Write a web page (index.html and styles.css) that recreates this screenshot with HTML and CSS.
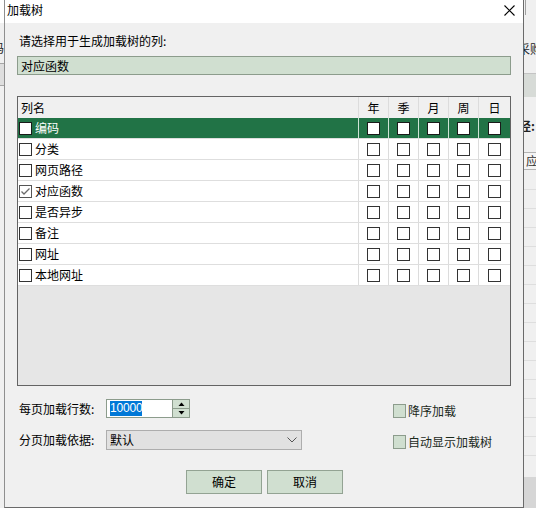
FILE: index.html
```html
<!DOCTYPE html>
<html lang="zh-CN">
<head>
<meta charset="utf-8">
<title>加载树</title>
<link rel="stylesheet" href="styles.css">
</head>
<body>
<div class="desktop">
  <div class="app-left">
    <div class="app-left-top"></div>
    <span class="app-left-text">码</span>
    <div class="app-left-box"></div>
  </div>
  <div class="app-right">
    <div class="app-right-tick"></div>
    <span class="app-right-text t1">采购</span>
    <div class="app-right-band"></div>
    <span class="app-right-text t2">径:</span>
    <div class="app-right-cell"><span>应</span></div>
    <div class="app-right-lines"></div>
    <div class="app-right-foot"></div>
  </div>

  <div class="dialog">
    <div class="titlebar">
      <span class="title">加载树</span>
      <svg class="close" width="11" height="11" viewBox="0 0 11 11"><path d="M0.5 0.5 L10.5 10.5 M10.5 0.5 L0.5 10.5" stroke="#000" stroke-width="1.1" fill="none"/></svg>
    </div>
    <div class="dialog-body">
      <div class="prompt">请选择用于生成加载树的列:</div>
      <div class="selected-field">对应函数</div>

      <div class="grid">
        <div class="grid-row head">
          <div class="cell name-cell head-name">列名</div>
          <div class="cell chk-cell">年</div>
          <div class="cell chk-cell">季</div>
          <div class="cell chk-cell">月</div>
          <div class="cell chk-cell">周</div>
          <div class="cell chk-cell">日</div>
        </div>
        <div class="grid-row active">
          <div class="cell name-cell"><span class="box"></span>编码</div>
          <div class="cell chk-cell"><span class="box"></span></div>
          <div class="cell chk-cell"><span class="box"></span></div>
          <div class="cell chk-cell"><span class="box"></span></div>
          <div class="cell chk-cell"><span class="box"></span></div>
          <div class="cell chk-cell"><span class="box"></span></div>
        </div>
        <div class="grid-row">
          <div class="cell name-cell"><span class="box"></span>分类</div>
          <div class="cell chk-cell"><span class="box"></span></div>
          <div class="cell chk-cell"><span class="box"></span></div>
          <div class="cell chk-cell"><span class="box"></span></div>
          <div class="cell chk-cell"><span class="box"></span></div>
          <div class="cell chk-cell"><span class="box"></span></div>
        </div>
        <div class="grid-row">
          <div class="cell name-cell"><span class="box"></span>网页路径</div>
          <div class="cell chk-cell"><span class="box"></span></div>
          <div class="cell chk-cell"><span class="box"></span></div>
          <div class="cell chk-cell"><span class="box"></span></div>
          <div class="cell chk-cell"><span class="box"></span></div>
          <div class="cell chk-cell"><span class="box"></span></div>
        </div>
        <div class="grid-row">
          <div class="cell name-cell"><span class="box checked"><svg width="11" height="11" viewBox="0 0 11 11"><polyline points="1.5,5.5 4,8 9.5,2.5" fill="none" stroke="#6b6b6b" stroke-width="1.3"/></svg></span>对应函数</div>
          <div class="cell chk-cell"><span class="box"></span></div>
          <div class="cell chk-cell"><span class="box"></span></div>
          <div class="cell chk-cell"><span class="box"></span></div>
          <div class="cell chk-cell"><span class="box"></span></div>
          <div class="cell chk-cell"><span class="box"></span></div>
        </div>
        <div class="grid-row">
          <div class="cell name-cell"><span class="box"></span>是否异步</div>
          <div class="cell chk-cell"><span class="box"></span></div>
          <div class="cell chk-cell"><span class="box"></span></div>
          <div class="cell chk-cell"><span class="box"></span></div>
          <div class="cell chk-cell"><span class="box"></span></div>
          <div class="cell chk-cell"><span class="box"></span></div>
        </div>
        <div class="grid-row">
          <div class="cell name-cell"><span class="box"></span>备注</div>
          <div class="cell chk-cell"><span class="box"></span></div>
          <div class="cell chk-cell"><span class="box"></span></div>
          <div class="cell chk-cell"><span class="box"></span></div>
          <div class="cell chk-cell"><span class="box"></span></div>
          <div class="cell chk-cell"><span class="box"></span></div>
        </div>
        <div class="grid-row">
          <div class="cell name-cell"><span class="box"></span>网址</div>
          <div class="cell chk-cell"><span class="box"></span></div>
          <div class="cell chk-cell"><span class="box"></span></div>
          <div class="cell chk-cell"><span class="box"></span></div>
          <div class="cell chk-cell"><span class="box"></span></div>
          <div class="cell chk-cell"><span class="box"></span></div>
        </div>
        <div class="grid-row">
          <div class="cell name-cell"><span class="box"></span>本地网址</div>
          <div class="cell chk-cell"><span class="box"></span></div>
          <div class="cell chk-cell"><span class="box"></span></div>
          <div class="cell chk-cell"><span class="box"></span></div>
          <div class="cell chk-cell"><span class="box"></span></div>
          <div class="cell chk-cell"><span class="box"></span></div>
        </div>
      </div>

      <div class="options">
        <div class="opt-label">每页加载行数:</div>
        <div class="spinner">
          <div class="spin-text"><span class="sel">10000</span></div>
          <div class="spin-btns">
            <div class="spin-btn"><svg width="7" height="4" viewBox="0 0 7 4"><polygon points="0.5,4 3.5,0.5 6.5,4" fill="#000"/></svg></div>
            <div class="spin-btn down"><svg width="7" height="4" viewBox="0 0 7 4"><polygon points="0.5,0 3.5,3.5 6.5,0" fill="#000"/></svg></div>
          </div>
        </div>
        <div class="check-option"><span class="sage-box"></span>降序加载</div>

        <div class="opt-label">分页加载依据:</div>
        <div class="combo"><span>默认</span><svg width="10" height="6" viewBox="0 0 10 6"><polyline points="0.5,0.5 5,5 9.5,0.5" fill="none" stroke="#555" stroke-width="1"/></svg></div>
        <div class="check-option"><span class="sage-box"></span>自动显示加载树</div>
      </div>

      <div class="buttons">
        <button class="btn">确定</button>
        <button class="btn">取消</button>
      </div>
    </div>
  </div>
</div>
</body>
</html>
```

FILE: styles.css
```css
* { box-sizing: border-box; }
html, body { margin: 0; padding: 0; }
body {
  font-family: "Noto Sans CJK SC", "Noto Sans", sans-serif;
  font-size: 12px;
  color: #000;
  background: #f0f0f0;
}
.desktop {
  position: relative;
  width: 536px;
  height: 508px;
  overflow: hidden;
  background: #f0f0f0;
}

/* background application fragments */
.app-left {
  position: absolute;
  left: 0; top: 0;
  width: 5px; height: 508px;
  overflow: hidden;
  background: #f0f0f0;
}
.app-left-top { height: 23px; background: #fff; }
.app-left-text {
  position: absolute; left: -8px; top: 40px;
  font-size: 12px; line-height: 16px; color: #222;
  white-space: nowrap;
}
.app-left-box {
  position: absolute; left: 0; top: 63px;
  width: 5px; height: 23px;
  border-top: 1px solid #a6a6a6;
  border-bottom: 1px solid #a6a6a6;
  background: #dedede;
}
.app-right {
  position: absolute;
  left: 512px; top: 0;
  width: 24px; height: 508px;
  overflow: hidden;
  background: #f0f0f0;
}
.app-right-tick {
  position: absolute; left: 13px; top: 0;
  width: 1px; height: 15px; background: #a0a0a0;
}
.app-right-text {
  position: absolute;
  font-size: 12px; line-height: 16px; color: #222;
  white-space: nowrap;
}
.t1 { left: 6px; top: 41px; }
.t2 { left: 7px; top: 118px; font-weight: bold; }
.app-right-band {
  position: absolute; left: 0; right: 0; top: 73px; height: 24px;
  background: #d7dbd7;
  border-top: 1px solid #c4c4c4;
}
.app-right-cell {
  position: absolute; left: 10px; right: -2px; top: 152px; height: 18px;
  border: 1px solid #b4b4b4;
  background: #f4f4f4;
  font-size: 12px; line-height: 16px;
  padding-left: 3px; color: #333;
  white-space: nowrap;
}
.app-right-lines {
  position: absolute; left: 0; right: 0; top: 171px; height: 300px;
  background: repeating-linear-gradient(to bottom, #f0f0f0 0, #f0f0f0 18px, #dedede 18px, #dedede 19px);
}
.app-right-foot {
  position: absolute; left: 0; right: 0; top: 477px; bottom: 0;
  background: #d6d6d6;
}

/* dialog window */
.dialog {
  position: absolute;
  left: 4px; top: 0;
  width: 520px; height: 508px;
  background: #f0f0f0;
  border-left: 1px solid #8f8f8f;
  border-right: 1px solid #6a6a6a;
  border-bottom: 1px solid #6a6a6a;
  display: flex;
  flex-direction: column;
}
.titlebar {
  height: 23px;
  flex: none;
  background: #fff;
  display: flex;
  align-items: flex-start;
  padding-left: 2px;
}
.title {
  margin-top: 2px;
  line-height: 16px;
  font-size: 12px;
}
.close {
  margin-left: auto;
  margin-right: 8px;
  margin-top: 5px;
}
.dialog-body {
  padding: 10px 11px 0 12px;
}
.prompt {
  padding-left: 2px;
  line-height: 16px;
}
.selected-field {
  margin-top: 7px;
  width: 494px;
  height: 19px;
  border: 1px solid #8c9c8c;
  background: #d0dfd0;
  padding-left: 3px;
  line-height: 17px;
}

/* grid */
.grid {
  margin-top: 21px;
  width: 494px;
  height: 290px;
  border: 1px solid #646464;
  background: #e6e6e6;
}
.grid-row {
  display: grid;
  grid-template-columns: 340px 30px 30px 30px 30px 32px;
  height: 21px;
  background: #fff;
  border-bottom: 1px solid #dedede;
}
.grid-row.head {
  background: #f0f0f0;
  border-bottom: none;
}
.grid-row.active {
  background: #217346;
  color: #fff;
}
.cell {
  display: flex;
  align-items: center;
  line-height: 16px;
}
.name-cell {
  padding-left: 1px;
  gap: 3px;
}
.head-name { padding-left: 3px; }
.chk-cell {
  justify-content: center;
  border-left: 1px solid #dcdcdc;
}
.active .chk-cell { border-left-color: #cfe3d6; }
.box {
  width: 13px;
  height: 13px;
  flex: none;
  border: 1px solid #333;
  background: #fff;
  display: flex;
  align-items: center;
  justify-content: center;
}
.active .box { border-color: #1a1a1a; }
.box.checked { border-color: #555; }

/* options */
.options {
  margin-top: 13px;
  display: grid;
  grid-template-columns: 89px 287px auto;
  grid-template-rows: 19px 20px;
  row-gap: 12px;
  align-items: center;
}
.opt-label {
  padding-left: 2px;
  line-height: 16px;
}
.spinner {
  width: 84px;
  height: 19px;
  border: 1px solid #8c9c8c;
  background: #fff;
  display: flex;
}
.spin-text {
  flex: 1;
  padding-left: 3px;
  display: flex;
  align-items: center;
}
.sel {
  background: #0078d7;
  color: #fff;
  font-family: "Liberation Sans", Arial, sans-serif;
  font-size: 12px;
  line-height: 15px;
  letter-spacing: -0.2px;
}
.spin-btns {
  width: 17px;
  border-left: 1px solid #8c9c8c;
  display: flex;
  flex-direction: column;
}
.spin-btn {
  flex: 1;
  background: #d0dfd0;
  display: flex;
  align-items: center;
  justify-content: center;
}
.spin-btn.down { border-top: 1px solid #8c9c8c; }
.combo {
  width: 196px;
  height: 20px;
  border: 1px solid #adadad;
  background: #e1e1e1;
  padding-left: 3px;
  padding-right: 4px;
  display: flex;
  align-items: center;
  justify-content: space-between;
  line-height: 16px;
}
.check-option {
  display: flex;
  align-items: center;
  gap: 2px;
  padding-top: 4px;
  color: #1c2a1c;
  line-height: 16px;
}
.sage-box {
  width: 13px;
  height: 14px;
  border: 1px solid #8c9c8c;
  background: #d0dfd0;
}

/* buttons */
.buttons {
  margin-top: 20px;
  display: flex;
  justify-content: center;
  gap: 5px;
}
.btn {
  width: 76px;
  height: 24px;
  border: 1px solid #93a393;
  background: #d0dfd0;
  font-family: "Noto Sans CJK SC", "Noto Sans", sans-serif;
  font-size: 12px;
  color: #000;
  padding: 0;
  line-height: 16px;
}
```
